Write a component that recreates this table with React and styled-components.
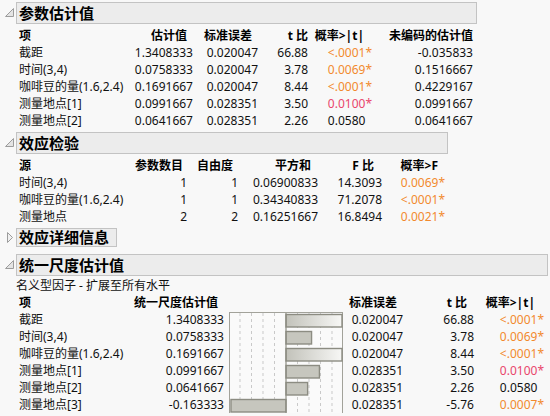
import React from "react";
import styled, { createGlobalStyle } from "styled-components";

const GlobalStyle = createGlobalStyle`
  html, body {
    margin: 0;
    padding: 0;
    background: #f8f8f8;
  }
  body {
    font-family: "Noto Sans", "Noto Sans CJK SC", sans-serif;
    font-size: 12px;
    color: #111;
  }
`;

const Page = styled.div`
  display: flex;
  flex-direction: column;
  align-items: flex-start;
  padding-top: 2px;
`;

const Outline = styled.section`
  display: grid;
  grid-template-columns: 16px auto;
  margin-top: ${(p) => p.$gap}px;
`;

const Toggle = styled.div`
  grid-column: 1;
  grid-row: 1;
  padding: ${(p) => (p.$closed ? "4px 0 0 7px" : "6px 0 0 5px")};
  line-height: 0;
`;

const TitleBox = styled.div`
  grid-column: 2;
  grid-row: 1;
  box-sizing: border-box;
  height: ${(p) => (p.$closed ? 19 : 22)}px;
  line-height: ${(p) => (p.$closed ? 17 : 20)}px;
  padding: 0 7px 0 2px;
  border: 1px solid #c3c3c3;
  background: #ececec;
  font-size: 15px;
  font-weight: bold;
  color: #000;
  white-space: nowrap;
`;

const Body = styled.div`
  grid-column: 2;
  padding-top: ${(p) => p.$top}px;
`;

const Note = styled.div`
  line-height: 17px;
  white-space: nowrap;
`;

const Table = styled.div`
  display: grid;
  grid-template-columns: ${(p) => p.$cols};
  grid-auto-rows: 17px;
  line-height: 17px;
  padding: 0 ${(p) => p.$right}px 0 3px;
  white-space: nowrap;
`;

const Head = styled.div`
  font-weight: bold;
  color: #000;
  text-align: ${(p) => (p.$left ? "left" : "right")};
  padding-right: ${(p) => p.$pr || 0}px;
`;

const Cell = styled.div`
  text-align: ${(p) => (p.$left ? "left" : "right")};
  color: ${(p) =>
    p.$tone === "orange" ? "#f28a2e" : p.$tone === "red" ? "#e9466c" : "#111"};
`;

const Star = styled.span`
  visibility: ${(p) => (p.$hide ? "hidden" : "visible")};
`;

const ChartCell = styled.div`
  grid-column: 3;
  grid-row: 2 / span 6;
  padding: 1px 0 0 5px;
  line-height: 0;
`;

const OpenIcon = () => (
  <svg width="9" height="9">
    <path d="M8.5 0.5 V8.5 H0.5 Z" fill="#e4e4e4" stroke="#9c9c9c" />
  </svg>
);

const ClosedIcon = () => (
  <svg width="7" height="11">
    <path d="M0.5 0.5 L5.5 5.5 L0.5 10.5 Z" fill="#f0f0f0" stroke="#9c9c9c" />
  </svg>
);

const Section = ({ title, closed, gap = 3, top = 3, children }) => (
  <Outline $gap={gap}>
    <Toggle $closed={closed}>{closed ? <ClosedIcon /> : <OpenIcon />}</Toggle>
    <TitleBox $closed={closed}>{title}</TitleBox>
    {!closed && <Body $top={top}>{children}</Body>}
  </Outline>
);

const tone = (p) => {
  if (p === "0.0100") return "red";
  if (p === "0.0580") return null;
  return "orange";
};

const PCell = ({ p }) => {
  const sig = p !== "0.0580";
  return (
    <Cell $tone={tone(p)}>
      {p}
      <Star $hide={!sig}>*</Star>
    </Cell>
  );
};

const paramRows = [
  ["截距", "1.3408333", "0.020047", "66.88", "<.0001", "-0.035833"],
  ["时间(3,4)", "0.0758333", "0.020047", "3.78", "0.0069", "0.1516667"],
  ["咖啡豆的量(1.6,2.4)", "0.1691667", "0.020047", "8.44", "<.0001", "0.4229167"],
  ["测量地点[1]", "0.0991667", "0.028351", "3.50", "0.0100", "0.0991667"],
  ["测量地点[2]", "0.0641667", "0.028351", "2.26", "0.0580", "0.0641667"],
];

const effectRows = [
  ["时间(3,4)", "1", "1", "0.06900833", "14.3093", "0.0069"],
  ["咖啡豆的量(1.6,2.4)", "1", "1", "0.34340833", "71.2078", "<.0001"],
  ["测量地点", "2", "2", "0.16251667", "16.8494", "0.0021"],
];

const scaledRows = [
  ["截距", 1.3408333, "1.3408333", "0.020047", "66.88", "<.0001"],
  ["时间(3,4)", 0.0758333, "0.0758333", "0.020047", "3.78", "0.0069"],
  ["咖啡豆的量(1.6,2.4)", 0.1691667, "0.1691667", "0.020047", "8.44", "<.0001"],
  ["测量地点[1]", 0.0991667, "0.0991667", "0.028351", "3.50", "0.0100"],
  ["测量地点[2]", 0.0641667, "0.0641667", "0.028351", "2.26", "0.0580"],
  ["测量地点[3]", -0.163333, "-0.163333", "0.028351", "-5.76", "0.0007"],
];

const BarChart = ({ values }) => {
  const w = 114;
  const h = 102;
  const zero = 57;
  const scale = 337;
  const grid = [1, 2, 3, 4].flatMap((k) => [zero - k * 11.5, zero + k * 11.5]);
  return (
    <svg width={w} height={h}>
      <defs>
        <linearGradient id="offscale" x1="0" x2="1" y1="0" y2="0">
          <stop offset="0" stopColor="#c2c2ba" />
          <stop offset="1" stopColor="#f7f7f5" />
        </linearGradient>
      </defs>
      <rect x="0.5" y="0.5" width={w - 1} height={h - 1} fill="#fafafa" stroke="#a2a29a" />
      {grid.map((x) => (
        <line
          key={x}
          x1={x}
          x2={x}
          y1="1"
          y2={h - 1}
          stroke="#c9c9c9"
          strokeDasharray="3 3"
        />
      ))}
      {values.map((v, i) => {
        const len = v * scale;
        const clipped = len > w - 1 - zero;
        const x = len >= 0 ? zero : zero + len;
        const width = len >= 0 ? Math.min(len, w - 1 - zero) : -len;
        return (
          <rect
            key={i}
            x={x}
            y={2.5 + i * 17}
            width={width}
            height="12.5"
            fill={clipped ? "url(#offscale)" : "#c6c6be"}
            stroke="#8c8c82"
            strokeWidth="1.4"
          />
        );
      })}
      <line x1={zero} x2={zero} y1="1" y2={h - 1} stroke="#8c8c82" strokeWidth="1.2" />
    </svg>
  );
};

export default function App() {
  return (
    <>
      <GlobalStyle />
      <Page>
        <Section title="参数估计值" gap={0}>
          <Table $cols="106px 68px 65px 50px 64px 101px" $right={4}>
            <Head $left>项</Head>
            <Head $pr={6}>估计值</Head>
            <Head $pr={6}>标准误差</Head>
            <Head>t 比</Head>
            <Head $pr={8}>概率&gt;|t|</Head>
            <Head>未编码的估计值</Head>
            {paramRows.map((r) => (
              <React.Fragment key={r[0]}>
                <Cell $left>{r[0]}</Cell>
                <Cell>{r[1]}</Cell>
                <Cell>{r[2]}</Cell>
                <Cell>{r[3]}</Cell>
                <PCell p={r[4]} />
                <Cell>{r[5]}</Cell>
              </React.Fragment>
            ))}
          </Table>
        </Section>

        <Section title="效应检验">
          <Table $cols="116px 52px 51px 80px 64px 63px" $right={3}>
            <Head $left>源</Head>
            <Head $pr={7}>参数数目</Head>
            <Head $pr={5}>自由度</Head>
            <Head $pr={7}>平方和</Head>
            <Head $pr={8}>F 比</Head>
            <Head $pr={7}>概率&gt;F</Head>
            {effectRows.map((r) => (
              <React.Fragment key={r[0]}>
                <Cell $left>{r[0]}</Cell>
                <Cell>{r[1]}</Cell>
                <Cell>{r[2]}</Cell>
                <Cell>{r[3]}</Cell>
                <Cell>{r[4]}</Cell>
                <PCell p={r[5]} />
              </React.Fragment>
            ))}
          </Table>
        </Section>

        <Section title="效应详细信息" closed />

        <Section title="统一尺度估计值" gap={7} top={1}>
          <Note>名义型因子 - 扩展至所有水平</Note>
          <Table $cols="115px 90px 123px 56px 71px 70px" $right={4}>
            <Head $left>项</Head>
            <Head $pr={7}>统一尺度估计值</Head>
            <Head />
            <Head $pr={6}>标准误差</Head>
            <Head $pr={7}>t 比</Head>
            <Head $pr={9}>概率&gt;|t|</Head>
            <ChartCell>
              <BarChart values={scaledRows.map((r) => r[1])} />
            </ChartCell>
            {scaledRows.map((r) => (
              <React.Fragment key={r[0]}>
                <Cell $left>{r[0]}</Cell>
                <Cell>{r[2]}</Cell>
                <Cell>{r[3]}</Cell>
                <Cell>{r[4]}</Cell>
                <PCell p={r[5]} />
              </React.Fragment>
            ))}
          </Table>
        </Section>
      </Page>
    </>
  );
}
